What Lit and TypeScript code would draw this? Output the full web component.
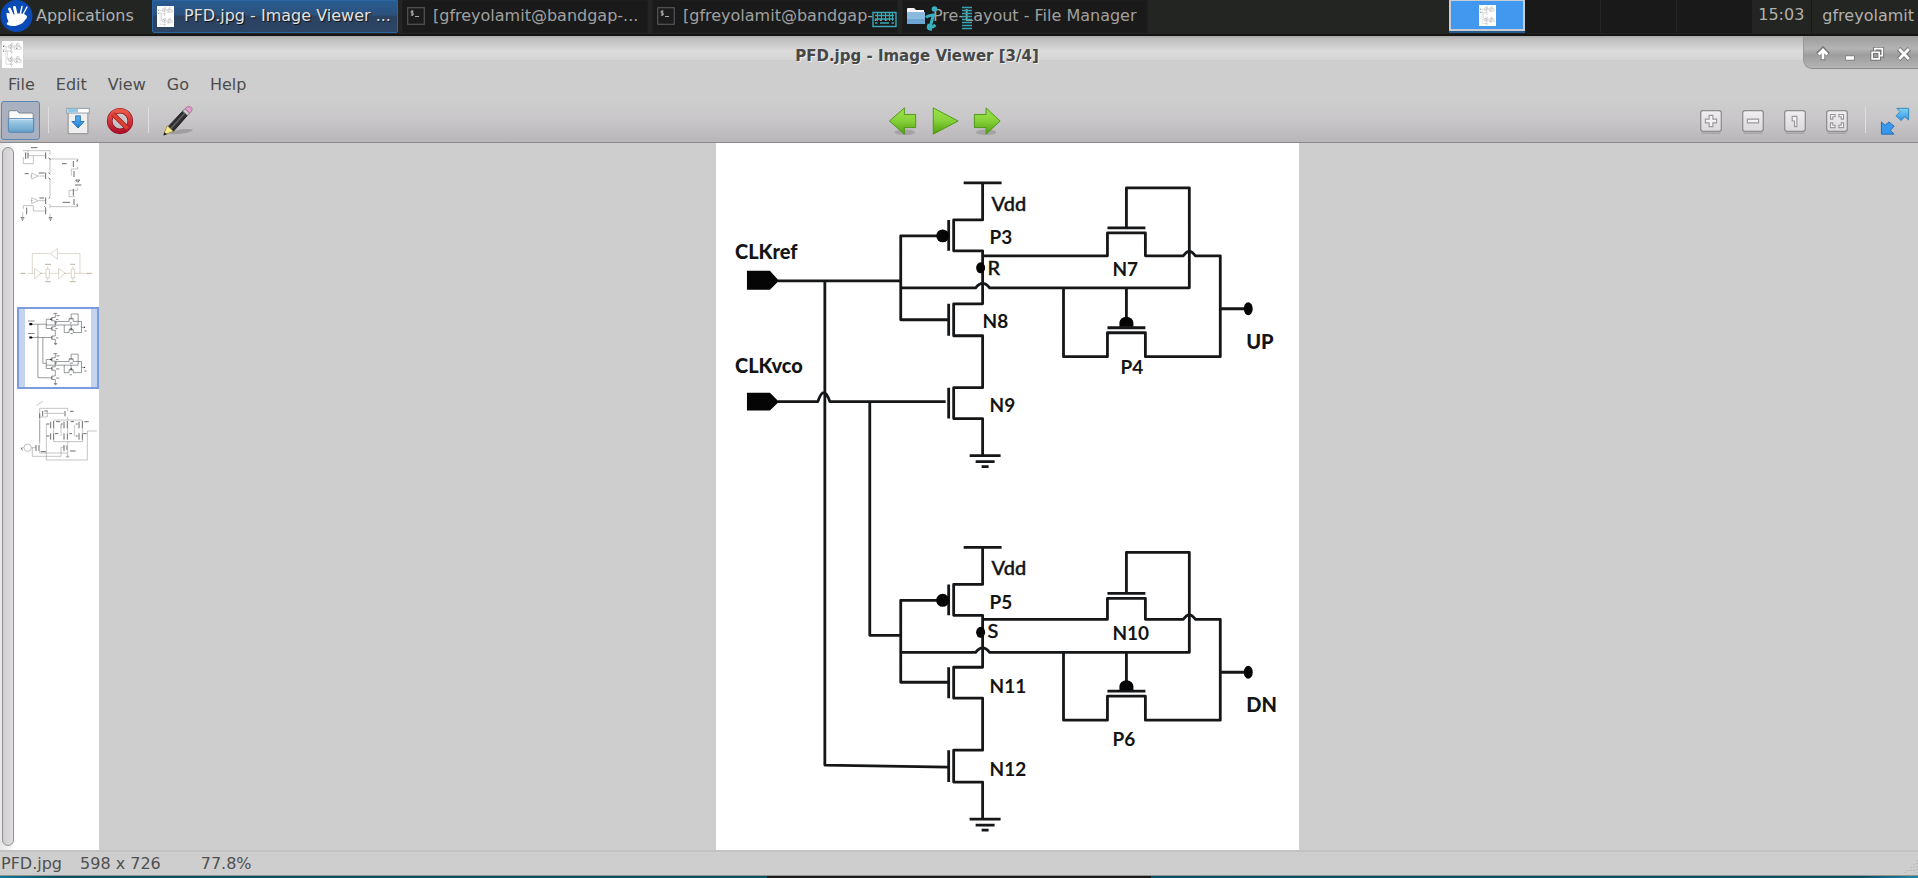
import { LitElement, html, svg, css } from "lit";
import { customElement, property, state } from "lit/decorators.js";

/* Heights of one phase-detector branch; both branches share their columns. */
interface Branch {
  vdd: number; pTop: number; pGate: number; pBot: number; node: number; dot: number;
  bus: number; aTop: number; aGate: number; aBot: number; bTop: number; bBot: number;
  gnd: number; loop: number; fGate: number; fTop: number; gGate: number; gTop: number;
  gBot: number; out: number;
}
const BRANCHES: Branch[] = [
  { vdd: 39, pTop: 76, pGate: 92, pBot: 107, node: 112, dot: 124, bus: 144, aTop: 160, aGate: 176, aBot: 192, bTop: 244, bBot: 275, gnd: 312, loop: 44, fGate: 84, fTop: 89, gGate: 184, gTop: 189, gBot: 213, out: 165 },
  { vdd: 404, pTop: 441, pGate: 457, pBot: 472, node: 476, dot: 489, bus: 509, aTop: 524, aGate: 539, aBot: 555, bTop: 607, bBot: 639, gnd: 676, loop: 409, fGate: 450, fTop: 455, gGate: 548, gTop: 553, gBot: 577, out: 529 },
];
const LABELS: [string, number, number, string][] = [
  ["CLKref", 19, 115, "big"], ["CLKvco", 19, 229, "big"], ["UP", 531, 205, "big"], ["DN", 531, 569, "big"],
  ["Vdd", 276, 67, "thin"], ["Vdd", 276, 432, "thin"], ["R", 272, 131, "thin"], ["S", 272, 495, "thin"],
  ["P3", 274, 100, "dev"], ["N8", 267, 184, "dev"], ["N9", 274, 268, "dev"], ["N7", 397, 132, "dev"], ["P4", 405, 230, "dev"],
  ["P5", 274, 466, "dev"], ["N11", 274, 550, "dev"], ["N12", 274, 633, "dev"], ["N10", 397, 497, "dev"], ["P6", 397, 603, "dev"],
];

function branch(b: Branch) {
  return svg`
    <path d="M248 ${b.vdd}H286M267 ${b.vdd}V${b.pTop}H238V${b.pBot}H267V${b.aTop}H238V${b.aBot}H267V${b.bTop}H238V${b.bBot}H267V${b.gnd}
      M233 ${b.pTop}V${b.pBot}M233 ${b.aTop}V${b.aBot}M233 ${b.bTop}V${b.bBot}
      M222 ${b.pGate}H185V${b.aGate}H233
      M254 ${b.gnd}H285M260 ${b.gnd + 6}H279M266 ${b.gnd + 11}H273
      M267 ${b.node}H392V${b.fTop}H430V${b.node}H468Q474 ${b.node - 9} 480 ${b.node}H505V${b.gBot}H430V${b.gTop}H392V${b.gBot}H348V${b.bus}
      M392 ${b.fGate}H430M411 ${b.fGate}V${b.loop}H474V${b.bus}H274Q267 ${b.bus - 9} 260 ${b.bus}H185
      M392 ${b.gGate}H430M411 ${b.bus}V${b.gGate - 8}M505 ${b.out}H533"/>
    <g class="solid">
      <circle cx="227" cy=${b.pGate} r="6.5"/>
      <ellipse cx="265" cy=${b.dot} rx="4.5" ry="5.5"/>
      <ellipse cx="533" cy=${b.out} rx="4.5" ry="6.5"/>
      <path d="M404 ${b.gGate - 1}V${b.gGate - 5}a7 6 0 0 1 14 0v4z"/>
    </g>`;
}

@customElement("circuit-view")
export class CircuitView extends LitElement {
  @property({ type: Boolean }) preview = false;
  static styles = css`
    :host { display: block; }
    svg { display: block; width: 100%; height: 100%; background: #fff; }
    .wires { fill: none; stroke: #141618; stroke-width: 2.8; stroke-linejoin: round; }
    .small { stroke-width: 5; stroke: #44484c; }
    .solid { fill: #050505; stroke: none; }
    text { font-family: Lato, Carlito, sans-serif; fill: #141414; font-size: 19px; font-weight: 700; }
    .big { font-size: 20px; font-weight: 900; }
    .thin { font-size: 20px; font-weight: 500; stroke: #141414; stroke-width: 0.4; }
    .hint { fill: #777; }
  `;
  render() {
    return html`<svg viewBox="0 -1 583 708" role="img" aria-label="PFD circuit">
      <g class="wires ${this.preview ? "small" : ""}">
        ${BRANCHES.map(branch)}
        <path d="M62 137H185M109 137V622L233 624M62 258H102Q108 240 114 258H230M154 258V492H185"/>
        <path class="solid" d="M31 127H54L63 137L54 146H31zM31 249H54L63 258L54 267H31z"/>
      </g>
      ${this.preview
        ? LABELS.map(([t, x, y]) => svg`<rect class="hint" x=${x} y=${y - 11} width=${t.length * 10} height="8"/>`)
        : LABELS.map(([t, x, y, c]) => svg`<text class=${c} x=${x} y=${y}>${t}</text>`)}
    </svg>`;
  }
}

const thumbs = [
  { name: "Charge pump", view: "51 24 246 246", art: svg`
    <path d="M68 47H150M84 58V46M70 66V86H100V63M84 62H139M150 47V57M150 70V115M150 72H233V80M233 95V102H214V122M150 130V188M233 158V166H207V185H225M150 206V218M150 215H233V205M70 212V222M70 212H100V228H139M68 232V248M150 236V248M90 123L95 123M115 123H137M92 197H98M115 197H137"/>
    <path d="M95 114V132L114 123zM95 188V206L114 197z"/>
    <path class="bold" d="M77 52V72M84 54V70M137 52V72M146 68L151 74M137 113V132M146 113L150 118M146 128L150 133M137 187V207M146 190L150 187M137 218V238M80 218V238M220 78V96M230 80L233 74M222 108V126M220 162V182M222 192V210M230 208L233 214M227 135L233 142L239 135zM62 248H73M64 252H71M66 256H69M146 248H157M148 252H155M150 256H153M93 38H112M186 86H200M74 116H86M116 114H134M118 189H132M225 150H244M188 202H210M133 214L137 218"/>` },
  { name: "Ring oscillator", view: "51 270 246 246", art: svg`
    <path class="tan" d="M84 415H104M123 415H138M148 415H176M195 415H213M224 415H256M97 415V355L148 356M172 356H240V415M172 341V372L150 356zM104 400V431L123 415zM176 400V431L195 415zM138 402H148V429H138zM214 402H224V429H214zM143 394V402M143 429V437M219 394V402M219 429V437"/>
    <path class="bold tan" d="M62 415H76M258 415H276M135 388H153M135 440H152M211 388H225M210 440H227M123 413V417M195 413V417"/>` },
  { name: "PFD", view: "", art: null },
  { name: "VCO", view: "51 762 246 246", art: svg`
    <path d="M110 811L128 799M119 820H203M119 820V928M119 846H142V828M132 835H192M203 820V828M203 846V855H248M119 855V920M161 855H203M161 880V895M203 880V895M248 880V895M139 867V975H262V888H290M183 867V880M161 912V920H248V912M183 903V870M223 903V870M203 920V928M97 938V964H183V937H192M119 948V954H203V945M203 954V966M198 964L203 969L208 964zM72 938A11 11 0 1 0 94 938A11 11 0 1 0 72 938M65 938H72M94 938H108"/>
    <path class="bold" d="M128 828V844M195 828V844M119 835V850M108 930V948M117 930V948M192 930V948M201 930V945M152 860V880M161 858V880M192 860V880M202 858V880M237 860V880M247 858V880M152 895V914M161 895V914M192 895V914M202 895V914M237 895V914M247 895V914M168 860H180M212 860H222M253 860H266M165 896H175M208 896H216M250 896H260M133 828H143M210 829H221M122 950H138M210 948H227M64 938L67 946M139 867H148M139 903H148M183 867H188M227 867H233M227 903H233"/>` },
];

/* Desktop and toolbar glyphs */
const grad = svg`<defs>
  <linearGradient id="g" x2="0" y2="1"><stop stop-color="#9be24a"/><stop offset=".5" stop-color="#86d13a"/><stop offset="1" stop-color="#4f9e0c"/></linearGradient>
  <linearGradient id="f" x2="0" y2="1"><stop stop-color="#a9d2ea"/><stop offset="1" stop-color="#659fcb"/></linearGradient>
  <linearGradient id="r" x2="0" y2="1"><stop stop-color="#ea5a48"/><stop offset="1" stop-color="#b3122c"/></linearGradient>
  <linearGradient id="b" x2="0" y2="1"><stop stop-color="#5fb4ee"/><stop offset="1" stop-color="#1f7fd6"/></linearGradient>
  <linearGradient id="c" x2="0" y2="1"><stop stop-color="#7fd4f4"/><stop offset="1" stop-color="#3490e6"/></linearGradient>
  <linearGradient id="w" x2="0" y2="1"><stop stop-color="#f1eff1"/><stop offset="1" stop-color="#dbd8db"/></linearGradient>
</defs>`;
const box = (inner: unknown) => svg`<path d="M6 29H26" stroke="#9a989a" stroke-width="1.5" opacity=".7"/>
  <rect x="5" y="5" width="22" height="22" rx="2.5" fill="url(#w)" stroke="#8f8d8f" stroke-width="1.4"/>
  <g fill="#f4f2f4" stroke="#999" stroke-width="1.2">${inner}</g>`;
const glyphs: Record<string, unknown> = {
  folder: svg`<path d="M3 13V6.500Q3 5 4.500 5H11.500L14 7.500H27.500Q29 7.500 29 9V15H3z" fill="#fbfbfb" stroke="#777f88"/>
    <path d="M2.500 13.500H29.500V26.500Q29.500 28 28 28H4Q2.500 28 2.500 26.500z" fill="url(#f)" stroke="#4b81ac"/><path d="M3.500 14.500H28.500" stroke="#d3e8f4"/>`,
  save: svg`<path d="M5.500 6V29.500H26.500V6" fill="#efefef" stroke="#8b8b8b"/><rect x="4" y="2.500" width="24" height="5" fill="#fff" stroke="#8b9aa5"/>
    <path d="M5 3H16V7H5z" fill="#92c8e8"/><path d="M13.500 10.500H18.500V16.500H22.500L16 23.500L9.500 16.500H13.500z" fill="url(#b)" stroke="#2874b6"/>`,
  stop: svg`<circle cx="16" cy="16" r="11" fill="none" stroke="#8f1222" stroke-width="6"/><circle cx="16" cy="16" r="11" fill="none" stroke="url(#r)" stroke-width="4.600"/>
    <path d="M8.500 8.500L23.500 23.500" stroke="#a81a2a" stroke-width="5"/><path d="M8 8L24 24" stroke="#d9402f" stroke-width="3.600"/>`,
  pencil: svg`<path d="M6 30Q16 23 32 25Q30 30 6 30" fill="#555" opacity=".3"/><path d="M21 5.500L26 10L11 27L5.500 22z" fill="#2e2e30" stroke="#1c1c1c"/>
    <path d="M23 8L8 24.500" stroke="#636363" stroke-width="1.600"/><path d="M4.500 21L11 27L.5 31z" fill="#f5eb8b" stroke="#8a803a" stroke-width=".8"/><path d="M.5 31.500L1.500 28L4.500 30z" fill="#222"/>
    <path d="M21 5.500L23.500 2.800L28.500 7.500L26 10z" fill="#c9ccd0" stroke="#777"/><path d="M23.500 2.800Q26 -.5 29.500 1Q33 3.500 28.500 7.500z" fill="#e6a0cf" stroke="#a86c96"/>`,
  back: svg`<ellipse cx="18" cy="28" rx="11" ry="3" fill="#555" opacity=".25"/><path d="M1.500 16L17.500 2V9H29.500V23H17.500V30z" fill="url(#g)" stroke="#4c9616"/>`,
  play: svg`<path d="M3.500 2L30 16L3.500 30z" fill="url(#g)" stroke="#4c9616"/>`,
  next: svg`<ellipse cx="15" cy="28" rx="11" ry="3" fill="#555" opacity=".25"/><path d="M30 16L15 2V9H2.500V23H15V30z" fill="url(#g)" stroke="#4c9616"/>`,
  plus: box(svg`<path d="M14 10H18V14H22V18H18V22H14V18H10V14H14z"/>`),
  minus: box(svg`<path d="M10 14H22V18H10z"/>`),
  one: box(svg`<path d="M13 11H18V22H15.500V16H13z"/>`),
  fit: box(svg`<path d="M9 9H14V11.500H11.500V14H9zM23 9H18V11.500H20.500V14H23zM9 23H14V20.500H11.500V18H9zM23 23H18V20.500H20.500V18H23z"/>`),
  full: svg`<path d="M18 2.500H30.500V15L26.500 11.500L22.500 15.500L17 10.500L21.500 6z" fill="url(#c)" stroke="#2e86bd"/><path d="M1.500 17L5.500 20.500L9.500 17L15 21.500L11 26L15 30H1.500z" fill="#3a97ee" stroke="#2268ae"/>`,
};
const glyph = (name: string) => html`<svg class="glyph" viewBox="0 0 32 32" aria-hidden="true">${grad}${glyphs[name]}</svg>`;

const terminal = html`<svg class="task-icon" viewBox="0 0 18 18" aria-hidden="true"><rect x=".7" y=".7" width="16.600" height="16.600" fill="#1c1c1c" stroke="#555" stroke-width="1.200"/><path d="M6.500 4.200H4.200V6H6.200V8H3.800M5.200 3.200V9M8 9.500H12" fill="none" stroke="#aaa"/></svg>`;
const files = html`<svg class="task-icon" viewBox="0 0 18 18" aria-hidden="true"><path d="M0 2Q0 1 1 1H7L9 3H17V8H0z" fill="#f5f5f5"/><path d="M0 5H18V17H0z" fill="#8ab9df"/><path d="M0 12H18V17H0z" fill="#6ea6d3"/></svg>`;

@customElement("app-root")
export class AppRoot extends LitElement {
  @state() private selected = 2;

  static styles = css`
    :host { display: flex; flex-direction: column; height: 100vh; overflow: hidden; background: #cecece; color: #4c4c4c; font: 16px/20px "DejaVu Sans", sans-serif; }
    button { font: inherit; color: inherit; background: none; border: 0; padding: 0; margin: 0; display: flex; align-items: center; }
    svg { display: block; flex: none; }

    .panel { position: relative; display: flex; height: 36px; box-sizing: border-box; background: #232522; border-bottom: 2px solid #151614; color: #b0b0ae; }
    .apps { width: 152px; gap: 3px; padding-bottom: 3px; }
    .apps svg { width: 33px; height: 32px; }
    .tasks { display: flex; gap: 4px; flex: 1; min-width: 0; }
    .task { flex: 0 1 246px; box-sizing: border-box; height: 33px; min-width: 0; padding: 0 4px 1px; gap: 8px; background: #191a19; color: #a0a0a0; border: 1px solid #1c1d1c; white-space: nowrap; overflow: hidden; }
    .task.active { gap: 10px; background: linear-gradient(#295c92, #2b517c 45%, #2c4261 50%, #2c4566); border-color: #2b66a3; border-radius: 0 0 2px 2px; color: #e2e2e2; text-shadow: 1px 1px 1px #111; }
    .task-icon { width: 18px; height: 18px; }
    .doc { flex: none; width: 17px; height: 21px; }
    .float { position: absolute; top: 6px; height: 25px; }
    .keys { left: 872px; width: 25px; }
    .info { left: 925px; width: 13px; }
    .gauge { left: 962px; width: 10px; }
    .pager { display: flex; }
    .desk { width: 76px; box-sizing: border-box; height: 33px; justify-content: center; background: #191919; border-right: 1px solid #242424; }
    .desk.here { background: #4297ef; border: 2px solid #c6cdd4; border-top-width: 1px; height: 31px; box-shadow: 0 2px #2a5c8e; }
    .clock { padding: 3px 7px 0 5px; border-right: 1px solid #191a19; line-height: 24px; }
    .user { padding: 0 4px 3px 10px; }

    .title { display: flex; height: 34px; background: linear-gradient(#a9a9a9, #bebebe 8%, #dbdbdb 44%, #d5d5d5 70%, #cecece 72%); }
    .title .doc { width: 21px; height: 27px; margin: 5px 0 0 2px; }
    .title h1 { flex: 1; margin: 0; padding: 10px 0 0 8px; font-size: 15px; line-height: 20px; font-weight: 700; text-align: center; color: #474747; text-shadow: 1px 1px #eee; }
    .controls { display: flex; align-items: center; height: 33px; box-sizing: border-box; padding: 4px 1px 0 6px; gap: 1px; background: linear-gradient(#9c9c9c, #b4b4b4 40%, #9d9d9d 60%, #b5b5b5); border-bottom: 1px solid #8c8c8c; border-left: 1px solid #999; border-radius: 0 0 0 9px; }
    .controls button { width: 26px; height: 26px; justify-content: center; }
    .controls svg { width: 16px; height: 16px; }

    .menu { display: flex; height: 30px; box-sizing: border-box; padding: 0 8px; gap: 21px; }
    .menu button { line-height: 30px; }

    .tools { display: flex; justify-content: space-between; height: 43px; box-sizing: border-box; padding: 1px 2px 2px 0; background: linear-gradient(#cecece, #c9c7c9 45%, #b8b6b8); border-bottom: 1px solid #8b8b8b; }
    .group { display: flex; }
    .tool { width: 42px; height: 39px; box-sizing: border-box; justify-content: center; }
    .tool.on { width: 39px; margin: 0 1px 0 1px; background: #a9b1c1; border: 1px solid #5c86b3; border-radius: 3px; }
    .glyph { width: 30px; height: 30px; overflow: visible; }
    .bar { width: 1px; height: 26px; margin: 6px 8px 0 7px; background: #dedede; }

    .body { flex: 1; min-height: 0; display: flex; }
    .side { display: flex; width: 99px; box-sizing: border-box; background: linear-gradient(90deg, #e6e6e6, #fff 16px); }
    .scroll { width: 12px; box-sizing: border-box; margin: 4px 3px 4px 2px; background: linear-gradient(90deg, #cfcdcf, #e0dee0); border: 1px solid #8f8f8f; border-radius: 6px; }
    .list { flex: 1; }
    .thumb { width: 100%; height: 82px; box-sizing: border-box; justify-content: center; }
    .thumb svg { width: 100%; height: 100%; fill: none; stroke: #777; stroke-width: 1.500; opacity: .85; }
    .thumb .bold { stroke: #555; stroke-width: 3; }
    .thumb .tan { stroke: #b0a58c; }
    .thumb.sel { background: #c5d4ee; border: 2px solid #7b9de0; }
    .thumb circuit-view { width: 66px; height: 100%; }
    .canvas { flex: 1; display: flex; justify-content: center; min-width: 0; padding-right: 2px; }
    .canvas circuit-view { height: 100%; aspect-ratio: 583 / 708; }

    .status { display: flex; justify-content: space-between; height: 26px; box-sizing: border-box; border-top: 2px solid #c3c3c3; border-bottom: 1px solid #929292; color: #505050; }
    .status div { display: flex; padding: 2px 0 0 1px; }
    .status span + span { margin-left: 18px; }
    .status span + span + span { margin-left: 40px; }
    .grip { width: 14px; height: 15px; margin-top: 7px; }
    .desktop { height: 2px; background: linear-gradient(90deg, #0f7898, #0b4f60 3%, #0b4f60 40%, #1c1c1c 40%, #1c1c1c 60%, #0a4f68 60%, #0b4f60 97%, #2486a8); }
  `;

  private tool(name: string, label: string, on = false) {
    return html`<button class="tool ${on ? "on" : ""}" aria-label=${label}>${glyph(name)}</button>`;
  }

  render() {
    return html`
      <header class="panel">
        <button class="apps">
          <svg viewBox="0 0 33 32" aria-hidden="true"><ellipse cx="16.500" cy="16" rx="16" ry="16" fill="#0a4ab6"/>
            <path d="M6.500 14Q6 12 8.500 13Q13 15.500 18 13.500Q24 12.500 27 16Q27.500 18 25 20Q23 24 17 25.500Q12 27 7 24.500Q6 23.500 8.500 21.500Q6.500 18 6.500 14z" fill="#fff"/>
            <path d="M12 14.500L9.500 9M16 14L14.500 7.500" stroke="#fff" stroke-width="3" stroke-linecap="round"/>
            <path d="M20.500 13L22 6.500M23.500 13.500L27 7" stroke="#fff" stroke-width="1.400" stroke-linecap="round"/></svg>
          Applications</button>
        <nav class="tasks" aria-label="Windows">
          <button class="task active"><circuit-view class="doc" preview></circuit-view>PFD.jpg - Image Viewer ...</button>
          <button class="task">${terminal}[gfreyolamit@bandgap-...</button>
          <button class="task">${terminal}[gfreyolamit@bandgap-...</button>
          <button class="task">${files}<span>Pre-Layout - File Manager</span></button>
        </nav>
        <svg class="float keys" viewBox="0 0 25 25" aria-hidden="true"><path d="M1 6.500H24V20.500H1zM3 9.500H22M3 13H22M3 17H5.500M8 17H17M19.500 17H22" fill="none" stroke="#39a9b8" stroke-width="1.400"/><path d="M5.500 7V15M9.500 7V15M13.500 7V15M17.500 7V15M20.500 7V15" stroke="#39a9b8"/></svg>
        <svg class="float info" viewBox="0 0 13 25" aria-hidden="true"><circle cx="9.500" cy="3" r="2.800" fill="#39b0bf"/><path d="M1 11.500Q3 9.500 8.500 9L5.500 19.500Q4.500 23.500 10.500 19" fill="none" stroke="#39b0bf" stroke-width="3"/><path d="M4 18Q1 24 7 23.500" fill="none" stroke="#39b0bf" stroke-width="2.500"/></svg>
        <svg class="float gauge" viewBox="0 0 10 25" aria-hidden="true"><path d="M0 1.500H10M0 4.500H10M0 7.500H10M0 10.500H10M0 13.500H10M0 16.500H10M0 19.500H10M0 22.500H10" stroke="#38a3b2" stroke-width="1.600"/></svg>
        <div class="pager">
          <button class="desk here" aria-label="Workspace 1"><circuit-view class="doc" preview></circuit-view></button>
          <button class="desk" aria-label="Workspace 2"></button>
          <button class="desk" aria-label="Workspace 3"></button>
          <button class="desk" aria-label="Workspace 4"></button>
        </div>
        <time class="clock">15:03</time>
        <button class="user">gfreyolamit</button>
      </header>

      <div class="title">
        <circuit-view class="doc" preview></circuit-view>
        <h1>PFD.jpg - Image Viewer [3/4]</h1>
        <div class="controls">
          <button aria-label="Roll up"><svg viewBox="0 0 18 18"><path d="M9 16V6M3 9.500L9 3.500L15 9.500" fill="none" stroke="#777" stroke-width="5"/><path d="M9 15V6M4 9.500L9 4.500L14 9.500" fill="none" stroke="#fff" stroke-width="3"/></svg></button>
          <button aria-label="Minimize"><svg viewBox="0 0 18 18"><path d="M4 11H14V16H4z" fill="#fff" stroke="#777"/></svg></button>
          <button aria-label="Restore"><svg viewBox="0 0 18 18"><path d="M6.500 5V3H15V11H12.500M3.500 7H11.500V14.500H3.500z" fill="none" stroke="#777" stroke-width="4"/><path d="M6.500 5V3H15V11H12.500M3.500 7H11.500V14.500H3.500z" fill="none" stroke="#fff" stroke-width="1.800"/></svg></button>
          <button aria-label="Close"><svg viewBox="0 0 18 18"><path d="M3 3L15 15M15 3L3 15" stroke="#777" stroke-width="5.500"/><path d="M3.500 3.500L14.500 14.500M14.500 3.500L3.500 14.500" stroke="#fff" stroke-width="3.200"/></svg></button>
        </div>
      </div>

      <nav class="menu" aria-label="Menu">
        ${["File", "Edit", "View", "Go", "Help"].map((m) => html`<button>${m}</button>`)}
      </nav>

      <div class="tools" role="toolbar" aria-label="Toolbar">
        <div class="group">
          ${this.tool("folder", "Open", true)}<span class="bar"></span>
          ${this.tool("save", "Save a copy")}${this.tool("stop", "Close image")}<span class="bar"></span>
          ${this.tool("pencil", "Edit")}
        </div>
        <div class="group">
          ${this.tool("back", "Previous image")}${this.tool("play", "Play slideshow")}${this.tool("next", "Next image")}
        </div>
        <div class="group">
          ${this.tool("plus", "Zoom in")}${this.tool("minus", "Zoom out")}${this.tool("one", "Original size")}${this.tool("fit", "Fit window")}
          <span class="bar"></span>${this.tool("full", "Fullscreen")}
        </div>
      </div>

      <main class="body">
        <aside class="side">
          <div class="scroll"></div>
          <div class="list">
            ${thumbs.map((t, i) => html`<button class="thumb ${i === this.selected ? "sel" : ""}" aria-label=${t.name} @click=${() => (this.selected = i)}>
              ${t.art ? html`<svg viewBox=${t.view}>${t.art}</svg>` : html`<circuit-view preview></circuit-view>`}
            </button>`)}
          </div>
        </aside>
        <section class="canvas"><circuit-view></circuit-view></section>
      </main>

      <footer class="status">
        <div><span>PFD.jpg</span><span>598 x 726</span><span>77.8%</span></div>
        <svg class="grip" viewBox="0 0 14 15" aria-hidden="true"><path d="M13 1V14M10 5V14M7 8V14M4 11V14M1 13V14" stroke="#aaa" stroke-dasharray="1 2"/></svg>
      </footer>
      <div class="desktop"></div>`;
  }
}
